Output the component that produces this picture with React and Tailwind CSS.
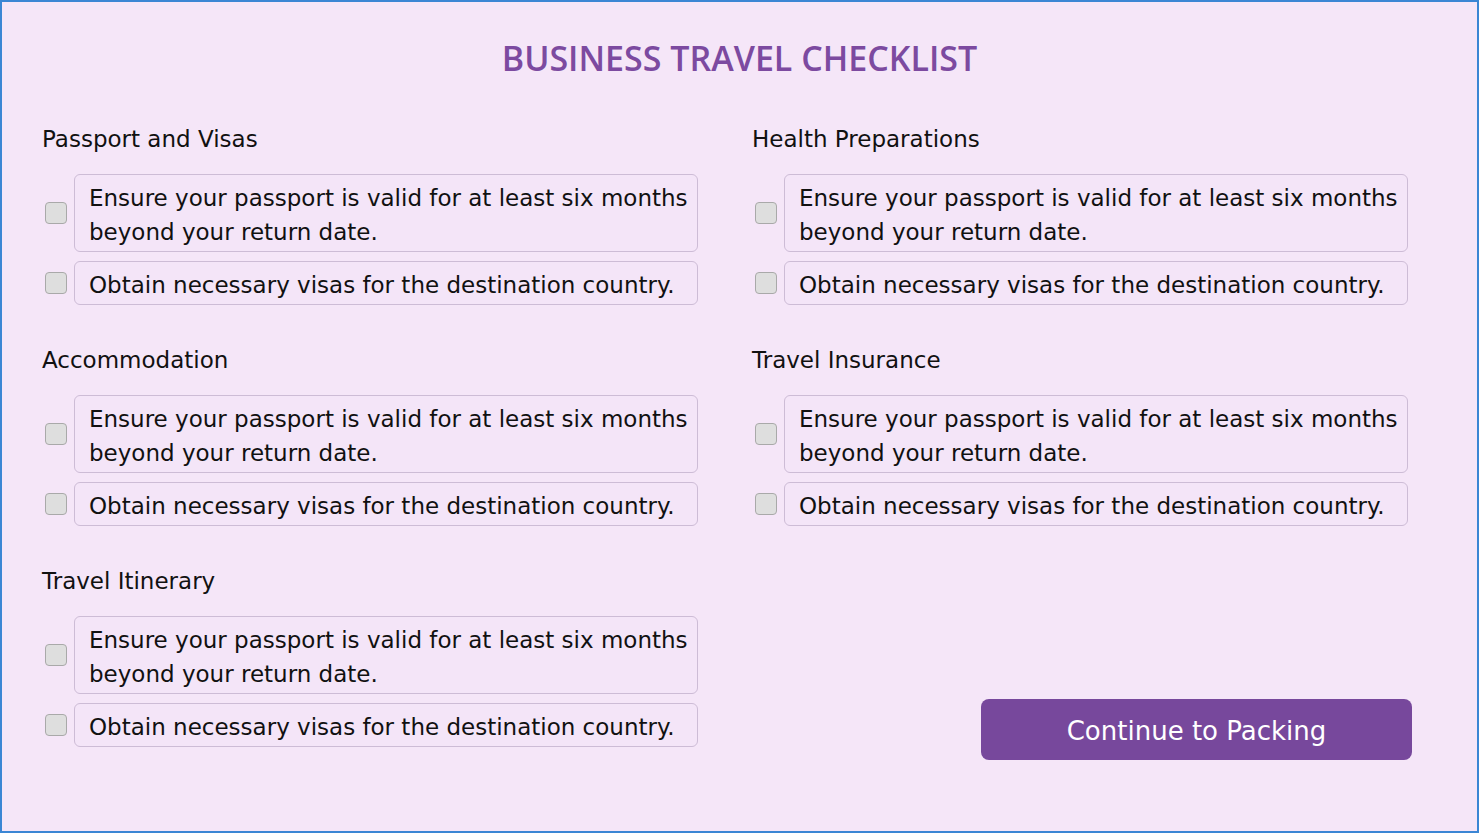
import React from "react";

const sections = [
  { title: "Passport and Visas" },
  { title: "Health Preparations" },
  { title: "Accommodation" },
  { title: "Travel Insurance" },
  { title: "Travel Itinerary" },
];

function CheckItem({ children }) {
  return (
    <div className="flex items-center">
      <input
        type="checkbox"
        className="ml-[3px] mr-[7px] h-[22px] w-[22px] shrink-0 appearance-none rounded-[4px] border border-[#a9a9a9] bg-[#dedede]"
      />
      <div className="min-w-0 flex-1 whitespace-nowrap rounded-[6px] border border-[#cdbcd6] bg-[#f4e5f8] px-[14px] pt-[6px] pb-[2px] text-[23px] leading-[34px] text-[#111]">
        {children}
      </div>
    </div>
  );
}

function Section({ title }) {
  return (
    <div className="flex flex-col">
      <h2 className="h-[36px] text-[23px] leading-[36px] text-[#111]">{title}</h2>
      <div className="mt-[17px] flex flex-col gap-[9px]">
        <CheckItem>
          Ensure your passport is valid for at least six months
          <br />
          beyond your return date.
        </CheckItem>
        <CheckItem>Obtain necessary visas for the destination country.</CheckItem>
      </div>
    </div>
  );
}

export default function App() {
  return (
    <div className="box-border h-[833px] w-full overflow-hidden border-2 border-[#3b86d4] bg-[#f5e6f8] font-['DejaVu_Sans',sans-serif]">
      {/* Title */}
      <h1 className="mt-[34px] text-center font-['Open_Sans',sans-serif] text-[34px] font-semibold leading-[44px] text-[#7c4aa0]">
        BUSINESS TRAVEL CHECKLIST
      </h1>

      {/* Sections */}
      <div className="mt-[41px] grid grid-cols-[656px_656px] gap-x-[54px] gap-y-[37px] pl-[40px]">
        {sections.map((s) => (
          <Section key={s.title} title={s.title} />
        ))}
        <div className="flex flex-col items-end pt-[136px]">
          <button className="mr-[-4px] h-[61px] w-[431px] rounded-[8px] bg-[#77489c] pt-[3px] text-[26px] text-white">
            Continue to Packing
          </button>
        </div>
      </div>
    </div>
  );
}
